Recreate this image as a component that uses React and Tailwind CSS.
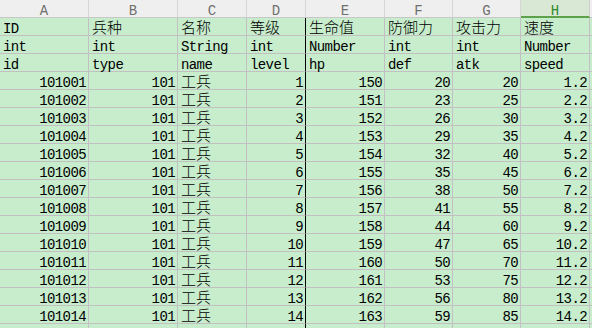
import React from "react";

const cols = ["A", "B", "C", "D", "E", "F", "G", "H", ""];

const head = [
  ["ID", "兵种", "名称", "等级", "生命值", "防御力", "攻击力", "速度"],
  ["int", "int", "String", "int", "Number", "int", "int", "Number"],
  ["id", "type", "name", "level", "hp", "def", "atk", "speed"],
];

const rows = Array.from({ length: 14 }, (_, i) => [
  String(101001 + i),
  "101",
  "工兵",
  String(i + 1),
  String(150 + i),
  String(20 + 3 * i),
  String(20 + 5 * i),
  `${i + 1}.2`,
]);

const isCJK = (s) => /[\u4e00-\u9fff]/.test(s);

function Cell({ text, right, col }) {
  const black = col === 3;
  return (
    <div
      className={`h-[18px] bg-[#c7edcc] border-b border-r border-b-[#c2c0c2] ${
        black ? "border-r-black" : "border-r-[#c2c0c2]"
      } pt-[4px] leading-[14px] tracking-[-0.6px] whitespace-nowrap overflow-visible ${
        right ? "text-right pr-[2px]" : "text-left pl-[3px]"
      }`}
    >
      {text && isCJK(text) ? (
        <span className="text-[15px] leading-[0] tracking-normal font-light">{text}</span>
      ) : (
        text
      )}
    </div>
  );
}

export default function App() {
  return (
    <div
      className="w-[592px] h-[328px] overflow-hidden bg-white text-[14px] text-black"
      style={{ fontFamily: "'Liberation Mono', 'Noto Sans CJK SC', monospace" }}
    >
      <div className="grid grid-cols-[89px_89px_69px_59px_79px_68px_68px_69px_1fr]">
        {cols.map((c, i) =>
          c === "H" ? (
            <div
              key={"h" + i}
              className="h-[18px] bg-[#d9e8d5] border-r border-r-[#d0d0d0] border-b-2 border-b-[#5da14b] pt-[4px] leading-[14px] text-center text-[#2f8a2a]"
            >
              {c}
            </div>
          ) : (
            <div
              key={"h" + i}
              className="h-[18px] bg-[#efefef] border-r border-r-[#d6d6d6] border-b border-b-[#c8c8c8] pt-[4px] leading-[14px] text-center text-[#707070]"
            >
              {c}
            </div>
          )
        )}
        {head.map((r, ri) => (
          <React.Fragment key={"hr" + ri}>
            {r.map((t, ci) => (
              <Cell key={ci} text={t} col={ci} />
            ))}
            <Cell text="" col={8} />
          </React.Fragment>
        ))}
        {rows.map((r, ri) => (
          <React.Fragment key={"r" + ri}>
            {r.map((t, ci) => (
              <Cell key={ci} text={t} col={ci} right={ci !== 2} />
            ))}
            <Cell text="" col={8} />
          </React.Fragment>
        ))}
        {cols.map((_, ci) => (
          <Cell key={"e" + ci} text="" col={ci} />
        ))}
      </div>
    </div>
  );
}
